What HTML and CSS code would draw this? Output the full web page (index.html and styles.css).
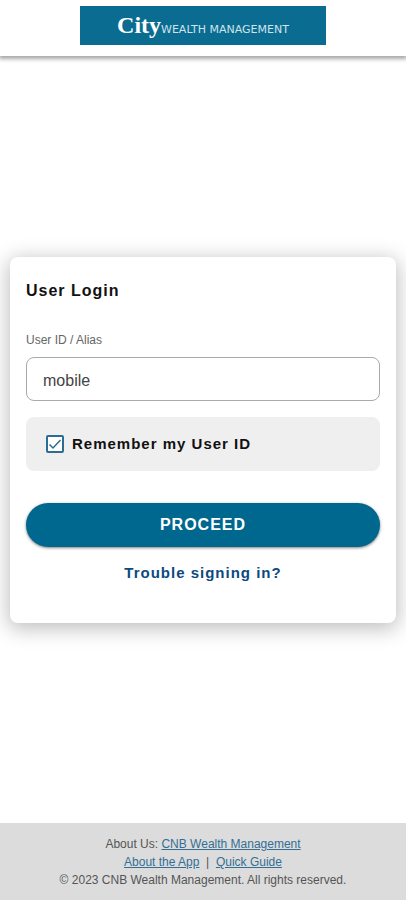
FILE: index.html
```html
<!DOCTYPE html>
<html lang="en">
<head>
<meta charset="utf-8">
<meta name="viewport" content="width=device-width, initial-scale=1">
<title>City Wealth Management</title>
<link rel="stylesheet" href="styles.css">
</head>
<body>
<header class="header">
  <div class="logo">
    <span class="logo-city">City</span>
    <span class="logo-sub">WEALTH MANAGEMENT</span>
  </div>
</header>

<main class="main">
  <form class="card">
    <h1 class="title">User Login</h1>
    <label class="label" for="userId">User ID / Alias</label>
    <input class="input" type="text" id="userId" value="mobile">
    <div class="remember">
      <input class="checkbox" type="checkbox" id="remember" checked>
      <label for="remember">Remember my User ID</label>
    </div>
    <button class="proceed" type="button">PROCEED</button>
    <a class="trouble" href="#">Trouble signing in?</a>
  </form>
</main>

<footer class="footer">
  <div>About Us: <a href="#">CNB Wealth Management</a></div>
  <div><a href="#">About the App</a> &nbsp;|&nbsp; <a href="#">Quick Guide</a></div>
  <div>© 2023 CNB Wealth Management. All rights reserved.</div>
</footer>
</body>
</html>
```
FILE: styles.css
```css
* {
  box-sizing: border-box;
}

body {
  margin: 0;
  min-height: 100vh;
  display: flex;
  flex-direction: column;
  background-color: #fff;
  color: #111;
  font-family: "Liberation Sans", Arial, sans-serif;
}

.header {
  display: flex;
  justify-content: center;
  padding: 6px 80px 11px;
  box-shadow: 0 2px 4px 1px rgba(0, 0, 0, 0.35);
}

.logo {
  flex: 1;
  display: flex;
  align-items: baseline;
  justify-content: center;
  height: 39px;
  background-color: #0a6c91;
  color: #fff;
  line-height: 38px;
  white-space: nowrap;
}

.logo-city {
  font-family: "Liberation Serif", "Times New Roman", serif;
  font-size: 24px;
  font-weight: bold;
}

.logo-sub {
  font-family: "DejaVu Sans", sans-serif;
  font-size: 11px;
  color: #cfe3ec;
}

.main {
  flex: 1;
  display: flex;
  align-items: center;
  padding: 10px;
}

.card {
  flex: 1;
  display: flex;
  flex-direction: column;
  padding: 24px 16px 40px;
  border-radius: 8px;
  background-color: #fff;
  box-shadow: 0 4px 20px 2px rgba(0, 0, 0, 0.25);
}

.title {
  margin: 0 0 30px;
  font-size: 16px;
  line-height: 20px;
  letter-spacing: 1px;
}

.label {
  margin-bottom: 8px;
  color: #666;
  font-size: 12px;
  line-height: 18px;
}

.input {
  width: 100%;
  height: 44px;
  padding: 4px 16px 0;
  border: 1px solid #aaa;
  border-radius: 8px;
  background-color: #fff;
  color: #444;
  font-family: inherit;
  font-size: 16px;
}

.remember {
  display: flex;
  align-items: center;
  gap: 8px;
  height: 54px;
  margin-top: 16px;
  padding: 0 20px;
  border-radius: 8px;
  background-color: #efefef;
  font-size: 15px;
  font-weight: bold;
  letter-spacing: 1px;
}

.checkbox {
  appearance: none;
  width: 18px;
  height: 18px;
  margin: 0;
  border: 2px solid #2b6d94;
  border-radius: 2px;
  background: #fff url("data:image/svg+xml,%3Csvg xmlns='http://www.w3.org/2000/svg' viewBox='0 0 14 14'%3E%3Cpath d='M1.5 7.5L5 11L12.5 3' fill='none' stroke='%232b6d94' stroke-width='1.5'/%3E%3C/svg%3E") center no-repeat;
}

.checkbox:not(:checked) {
  background-image: none;
}

.proceed {
  height: 44px;
  margin-top: 32px;
  border: none;
  border-radius: 22px;
  background-color: #00678f;
  box-shadow: 0 1px 3px rgba(0, 0, 0, 0.5);
  color: #fff;
  font-family: inherit;
  font-size: 16px;
  font-weight: bold;
  letter-spacing: 1px;
  cursor: pointer;
}

.trouble {
  align-self: center;
  margin-top: 16px;
  color: #0b4a80;
  font-size: 15px;
  font-weight: bold;
  line-height: 20px;
  letter-spacing: 1px;
  text-decoration: none;
}

.footer {
  padding: 12px 10px 11px;
  background-color: #dcdcdc;
  color: #555;
  font-size: 12px;
  line-height: 18px;
  text-align: center;
}

.footer a {
  color: #336f95;
}
```
